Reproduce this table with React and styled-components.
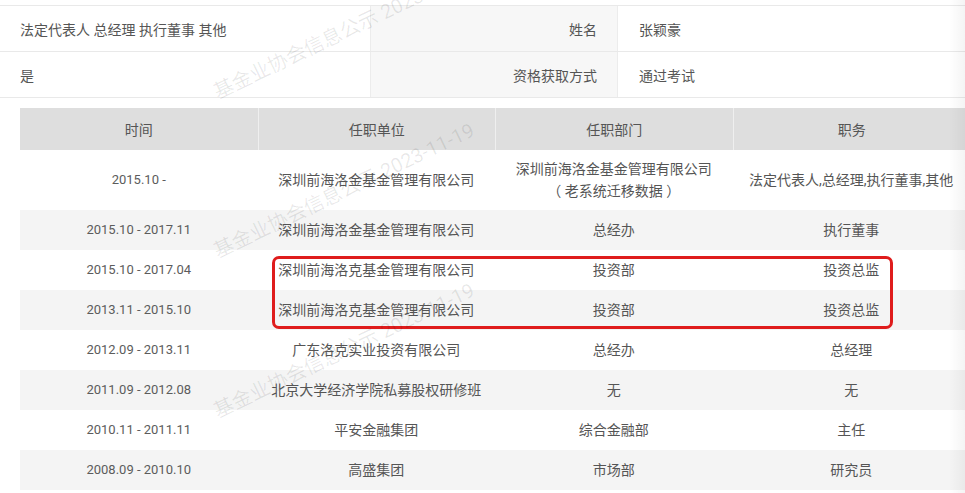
import React from 'react';
import styled, { createGlobalStyle } from 'styled-components';

const GlobalStyle = createGlobalStyle`
	html, body {
		margin: 0;
		padding: 0;
		background: #fff;
	}
	body {
		font-family: Roboto, "Noto Sans CJK SC", sans-serif;
		font-size: 14px;
		color: #555;
	}
`

const Page = styled.div`
	position: relative;
	width: 965px;
	height: 493px;
	overflow: hidden;
	padding-top: 5px;
	box-sizing: border-box;
`

const InfoTable = styled.div`
	border-top: 1px solid #e9e9e9;
`

const InfoRow = styled.div`
	display: grid;
	grid-template-columns: 370px 248px 1fr;
	height: 45px;
	border-bottom: 1px solid #e9e9e9;
`

const InfoValue = styled.div`
	display: flex;
	align-items: center;
	padding-left: ${props => props.indent || 20}px;
`

const InfoLabel = styled.div`
	display: flex;
	align-items: center;
	justify-content: flex-end;
	padding-right: 20px;
	background-color: #f7f7f7;
	border-left: 1px solid #ececec;
	border-right: 1px solid #ececec;
`

const HistoryTable = styled.div`
	width: 950px;
	margin: 10px 0 0 20px;
`

const Row = styled.div`
	display: grid;
	grid-template-columns: repeat(4, 1fr);
	height: ${props => props.tall ? 60 : 40}px;
	background-color: ${props => props.shaded ? '#f4f4f4' : '#fff'};
`

const HeadRow = styled(Row)`
	height: 42px;
	background-color: #dedede;
`

const HeadCell = styled.div`
	display: flex;
	align-items: center;
	justify-content: center;
	color: #555;

	& + & {
		border-left: 1px solid #efefef;
	}
`

const Cell = styled.div`
	display: flex;
	flex-direction: column;
	align-items: center;
	justify-content: center;
	text-align: center;
	line-height: 22px;
	white-space: nowrap;
	font-size: ${props => props.date ? 13 : 14}px;
	color: ${props => props.date ? '#5c5c5c' : '#555'};
`

const Highlight = styled.div`
	position: absolute;
	left: 272px;
	top: 256px;
	width: 621px;
	height: 73px;
	box-sizing: border-box;
	border: 3px solid #df1c1c;
	border-radius: 7px;
	pointer-events: none;
`

const Watermark = styled.div`
	position: absolute;
	left: 219px;
	top: ${props => props.top}px;
	line-height: 20px;
	font-size: 20px;
	color: rgba(0, 0, 0, 0.09);
	white-space: nowrap;
	transform-origin: 0 100%;
	transform: rotate(-25.5deg);
	pointer-events: none;
`

const EdgeShade = styled.div`
	position: absolute;
	top: 0;
	right: 0;
	width: 16px;
	height: 100%;
	background: linear-gradient(to right, rgba(0, 0, 0, 0), rgba(0, 0, 0, 0.045));
	pointer-events: none;
`

const history = [
	{ time: '2015.10 -', unit: '深圳前海洛金基金管理有限公司', dept: ['深圳前海洛金基金管理有限公司', '（ 老系统迁移数据 ）'], title: '法定代表人,总经理,执行董事,其他' },
	{ time: '2015.10 - 2017.11', unit: '深圳前海洛金基金管理有限公司', dept: ['总经办'], title: '执行董事' },
	{ time: '2015.10 - 2017.04', unit: '深圳前海洛克基金管理有限公司', dept: ['投资部'], title: '投资总监' },
	{ time: '2013.11 - 2015.10', unit: '深圳前海洛克基金管理有限公司', dept: ['投资部'], title: '投资总监' },
	{ time: '2012.09 - 2013.11', unit: '广东洛克实业投资有限公司', dept: ['总经办'], title: '总经理' },
	{ time: '2011.09 - 2012.08', unit: '北京大学经济学院私募股权研修班', dept: ['无'], title: '无' },
	{ time: '2010.11 - 2011.11', unit: '平安金融集团', dept: ['综合金融部'], title: '主任' },
	{ time: '2008.09 - 2010.10', unit: '高盛集团', dept: ['市场部'], title: '研究员' },
];

const stamp = '基金业协会信息公示 2023-11-19';

const App = () => {
	return (
		<>
			<GlobalStyle />
			<Page>
				<InfoTable>
					<InfoRow>
						<InfoValue>法定代表人 总经理 执行董事 其他</InfoValue>
						<InfoLabel>姓名</InfoLabel>
						<InfoValue indent={21}>张颖豪</InfoValue>
					</InfoRow>
					<InfoRow>
						<InfoValue>是</InfoValue>
						<InfoLabel>资格获取方式</InfoLabel>
						<InfoValue indent={21}>通过考试</InfoValue>
					</InfoRow>
				</InfoTable>

				<HistoryTable>
					<HeadRow>
						<HeadCell>时间</HeadCell>
						<HeadCell>任职单位</HeadCell>
						<HeadCell>任职部门</HeadCell>
						<HeadCell>职务</HeadCell>
					</HeadRow>
					{
						history.map((item, i) => (
							<Row key={i} shaded={i % 2 === 1} tall={item.dept.length > 1}>
								<Cell date>{item.time}</Cell>
								<Cell>{item.unit}</Cell>
								<Cell>
									{item.dept.map(line => <span key={line}>{line}</span>)}
								</Cell>
								<Cell>{item.title}</Cell>
							</Row>
						))
					}
				</HistoryTable>

				<Highlight />
				<Watermark top={82}>{stamp}</Watermark>
				<Watermark top={241}>{stamp}</Watermark>
				<Watermark top={401}>{stamp}</Watermark>
				<EdgeShade />
			</Page>
		</>
	);
}

export default App;
